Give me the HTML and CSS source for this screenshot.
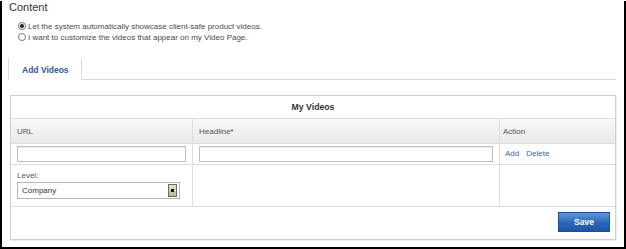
FILE: index.html
```html
<!DOCTYPE html>
<html lang="en">
<head>
  <meta charset="UTF-8">
  <title>Video Page Content</title>
  <link rel="stylesheet" href="styles.css">
</head>
<body>
  <div class="page">
    <h1 class="section-title">Content</h1>

    <!-- Source options -->
    <div class="options">
      <label class="option"><span class="radio checked"></span>Let the system automatically showcase client-safe product videos.</label>
      <label class="option"><span class="radio"></span>I want to customize the videos that appear on my Video Page.</label>
    </div>

    <!-- Tabs -->
    <div class="tabs">
      <div class="tab active">Add Videos</div>
    </div>

    <!-- Videos table -->
    <table class="videos">
      <tr class="caption-row">
        <td colspan="3">My Videos</td>
      </tr>
      <tr class="head-row">
        <th class="col-url">URL</th>
        <th class="col-headline">Headline<span class="req">*</span></th>
        <th class="col-action">Action</th>
      </tr>
      <tr class="input-row">
        <td><input type="text" class="field"></td>
        <td><input type="text" class="field"></td>
        <td class="links"><a href="#">Add</a><a href="#">Delete</a></td>
      </tr>
      <tr class="level-row">
        <td>
          <div class="level-label">Level:</div>
          <div class="select">
            <span class="select-value">Company</span>
            <span class="select-btn"></span>
          </div>
        </td>
        <td></td>
        <td></td>
      </tr>
      <tr class="footer-row">
        <td colspan="3"><button class="save">Save</button></td>
      </tr>
    </table>
  </div>
</body>
</html>
```

FILE: styles.css
```css
/* Base */
* { box-sizing: border-box; }
body {
  margin: 0;
  font-family: 'Liberation Sans', Arial, sans-serif;
  background: #fff;
  color: #333;
}
.page {
  height: 249px;
  border-left: 2px solid #000;
  border-right: 2px solid #000;
  border-bottom: 3px solid #000;
  padding: 0 0 0 6px;
}
.section-title {
  margin: 1px 0 0 1px;
  font-size: 11px;
  line-height: 12px;
  font-weight: normal;
  color: #333;
}

/* Radio options */
.options {
  margin-top: 8px;
  padding-left: 10px;
}
.option {
  display: flex;
  align-items: flex-start;
  gap: 2px;
  font-size: 8px;
  line-height: 11px;
  color: #4a4a4a;
}
.radio {
  width: 8px;
  height: 8px;
  margin-top: 1px;
  border: 1px solid #777;
  border-radius: 50%;
  background: #fff;
  display: flex;
  align-items: center;
  justify-content: center;
}
.radio.checked::after {
  content: "";
  width: 4px;
  height: 4px;
  border-radius: 50%;
  background: #222;
}

/* Tabs */
.tabs {
  margin-top: 15px;
  margin-right: 8px;
  display: flex;
  border-bottom: 1px solid #d6d6d6;
}
.tab {
  width: 74px;
  height: 22px;
  padding-left: 13px;
  border-left: 1px solid #dcdcdc;
  border-right: 1px solid #dcdcdc;
  margin-bottom: -1px;
  background: #fff;
  font-size: 8.5px;
  font-weight: bold;
  line-height: 24px;
  color: #2d5b8c;
}

/* Videos table */
.videos {
  margin: 15px 0 0 2px;
  width: 606px;
  border-collapse: separate;
  border-spacing: 0;
  border: 1px solid #cfcfcf;
  box-shadow: 1px 1px 0 #ececec;
  font-size: 8px;
  color: #555;
}
.videos td, .videos th {
  padding: 0 6px;
  border-top: 1px solid #dedede;
  text-align: left;
  font-weight: normal;
}
.videos tr > :nth-child(2), .videos tr > :nth-child(3) {
  border-left: 1px solid #dedede;
}
.caption-row td {
  border-top: none;
  height: 22px;
  text-align: center;
  font-weight: bold;
  font-size: 8.7px;
  color: #333;
}
.head-row th {
  height: 25px;
  background: linear-gradient(#f8f8f8, #e9e9e9);
}
.col-url { width: 181px; }
.col-headline { width: 307px; }
.videos th.col-action { padding-left: 3px; }
.req { color: #c00; }
.input-row td { height: 21px; }
.field {
  display: block;
  width: 100%;
  height: 16px;
  margin: 0;
  border: 1px solid #bdbdbd;
  box-shadow: inset 0 1px 1px #eee;
  background: #fff;
}
.links { padding-left: 5px !important; padding-bottom: 2px !important; }
.links a {
  color: #3569a8;
  text-decoration: none;
  margin-right: 7px;
}
.level-row td {
  height: 42px;
  vertical-align: top;
  padding-top: 6px;
}
.level-label {
  line-height: 10px;
  color: #555;
}
.select {
  margin-top: 1px;
  width: 163px;
  height: 17px;
  display: flex;
  align-items: center;
  justify-content: space-between;
  border: 1px solid #b5b5b5;
  background: #fff;
  padding: 0 2px 0 4px;
}
.select-value { color: #333; font-size: 8px; }
.select-btn {
  width: 9px;
  height: 13px;
  border: 1px solid #6c6c5a;
  background: linear-gradient(#e4e2d0, #b9b79e);
  display: flex;
  align-items: center;
  justify-content: center;
}
.select-btn::after {
  content: "";
  width: 3px;
  height: 3px;
  background: #111;
}
.footer-row td {
  height: 33px;
  vertical-align: top;
  padding: 5px 5px 0 0;
  text-align: right;
}
.save {
  width: 52px;
  height: 20px;
  border: 1px solid #1d4e92;
  background: linear-gradient(#5f98da, #2a66b8 55%, #1c56a8);
  color: #fff;
  font-family: 'Liberation Sans', Arial, sans-serif;
  font-size: 8.5px;
  font-weight: bold;
  cursor: pointer;
}
```
